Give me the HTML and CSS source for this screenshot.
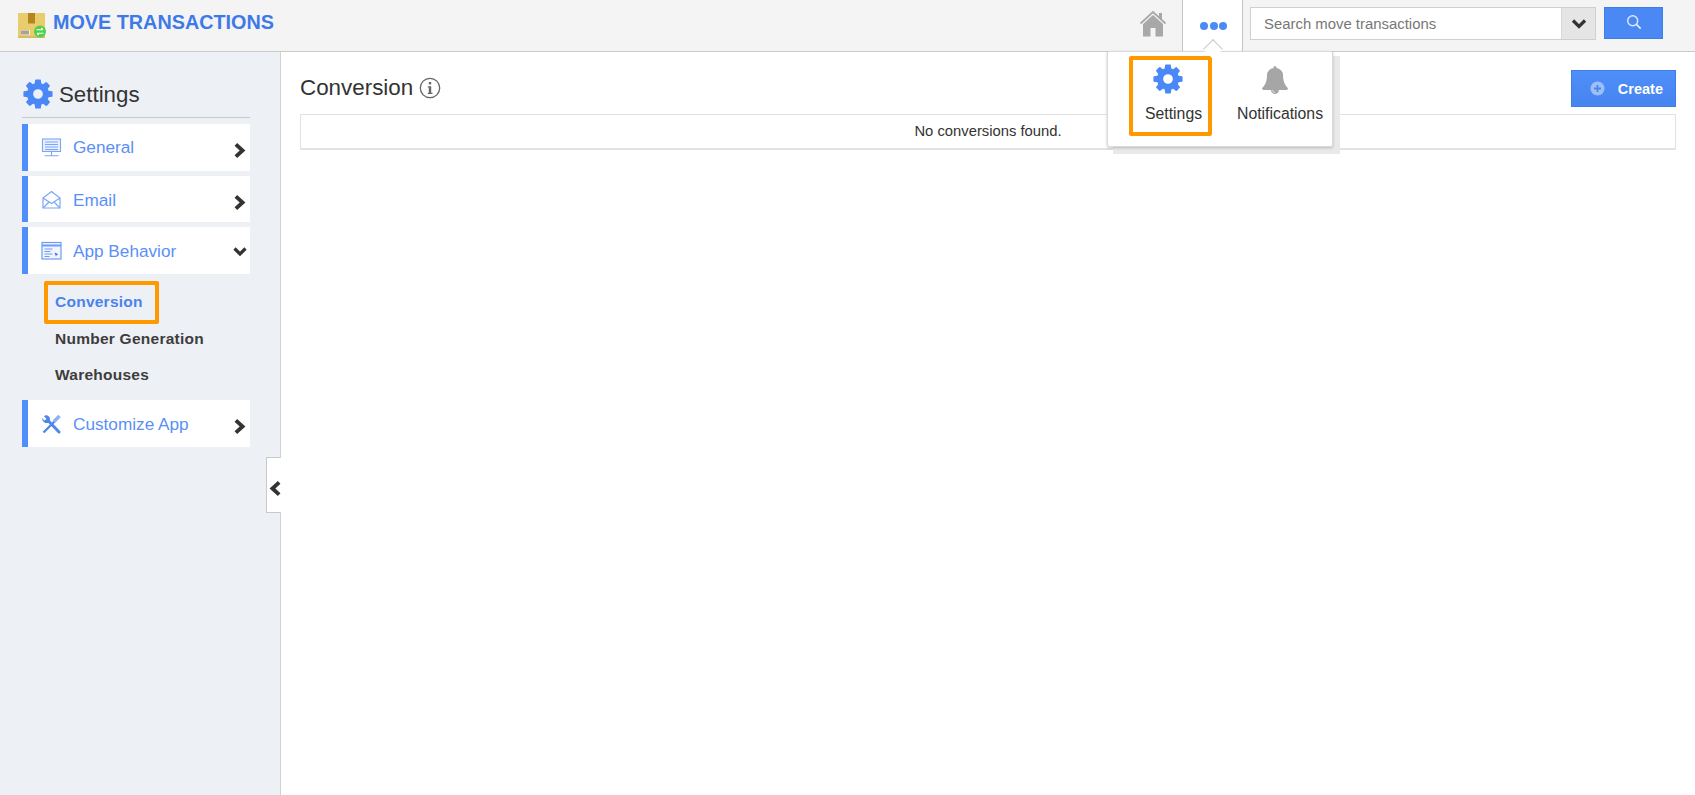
FILE: index.html
```html
<!DOCTYPE html>
<html lang="en">
<head>
<meta charset="utf-8">
<title>Move Transactions</title>
<link rel="stylesheet" href="styles.css">
</head>
<body>
<svg class="defs" aria-hidden="true">
  <symbol id="cog" viewBox="0 0 1792 1792"><path fill-rule="evenodd" d="M1152 896q0-106-75-181t-181-75-181 75-75 181 75 181 181 75 181-75 75-181zm512-109v222q0 12-8 23t-20 13l-185 28q-19 54-39 91 35 50 107 138 10 12 10 25t-9 23q-27 37-99 108t-94 71q-12 0-26-9l-138-108q-44 23-91 38-16 136-29 186-7 28-36 28h-222q-14 0-24.500-8.500t-11.500-21.500l-28-184q-49-16-90-37l-141 107q-10 9-25 9-14 0-25-11-126-114-165-168-7-10-7-23 0-12 8-23 15-21 51-66.500t54-70.500q-27-50-41-99l-183-27q-13-2-21-12.500t-8-23.500v-222q0-12 8-23t19-13l186-28q14-46 39-92-40-57-107-138-10-12-10-24 0-10 9-23 26-36 98.500-107.500t94.500-71.500q13 0 26 10l138 107q44-23 91-38 16-136 29-186 7-28 36-28h222q14 0 24.500 8.500t11.500 21.500l28 184q49 16 90 37l142-107q9-9 24-9 13 0 25 10 129 119 165 170 7 8 7 22 0 12-8 23-15 21-51 66.500t-54 70.500q26 50 41 98l183 28q13 2 21 12.500t8 23.500z"/></symbol>
  <symbol id="chev-r" viewBox="0 0 12 14"><polyline points="3,2 8.500,7 3,12" fill="none" stroke="currentColor" stroke-width="3.200"/></symbol>
</svg>

<header class="topbar">
  <div class="brand">
    <svg class="logo" width="30" height="27" viewBox="0 0 30 27">
      <rect x="1" y="1" width="27" height="24.500" fill="#e9cc6c"/>
      <rect x="1" y="24.500" width="27" height="1.300" fill="#cfb050"/>
      <rect x="11" y="1" width="7" height="10.500" fill="#b5851f"/>
      <rect x="4" y="18" width="9" height="5" fill="#f4f1e4"/>
      <path d="M5 18.500v4M7 18.500v4M9 18.500v4M11 18.500v4" stroke="#555" stroke-width="1"/>
      <circle cx="23" cy="19.500" r="6" fill="#4fd14a"/>
      <path d="M19.500 17.700h6.500M24.200 16l1.800 1.700M26.500 21.300h-6.500M21.800 23l-1.800-1.700" stroke="#fff" stroke-width="1.100" fill="none"/>
    </svg>
    <span class="brand-name">MOVE TRANSACTIONS</span>
  </div>
  <div class="top-actions">
    <a class="home-btn" aria-label="Home">
      <svg width="28" height="27" viewBox="0 0 28 27">
        <path d="M1.500 13.500 14 2l12.500 11.500" fill="none" stroke="#a8a8a8" stroke-width="1.700"/>
        <rect x="20" y="3" width="3" height="6" fill="#a8a8a8"/>
        <path d="M14 5 24 14v12.500h-7.500V18h-5v8.500H4V14z" fill="#a8a8a8"/>
      </svg>
    </a>
    <div class="more-tab">
      <span class="dots"><i></i><i></i><i></i></span>
      <span class="caret"></span>
    </div>
    <form class="search">
      <div class="search-box">
        <span class="search-input">Search move transactions</span>
        <span class="search-drop">
          <svg width="16" height="10" viewBox="0 0 16 10"><polyline points="2,1.500 8,7.500 14,1.500" fill="none" stroke="#333" stroke-width="3.200"/></svg>
        </span>
      </div>
      <button class="search-btn" type="button" aria-label="Search">
        <svg width="16" height="16" viewBox="0 0 16 16"><circle cx="6.700" cy="6.700" r="5" fill="none" stroke="#dfe9fb" stroke-width="1.400"/><path d="m10.400 10.400 4.300 4.300" stroke="#dfe9fb" stroke-width="1.800"/></svg>
      </button>
    </form>
  </div>
  <div class="popup-shadow"></div>
  <nav class="popup">
    <a class="popup-item popup-settings">
      <svg class="popup-ico blue" width="34" height="34"><use href="#cog"/></svg>
      <span>Settings</span>
    </a>
    <a class="popup-item popup-notif">
      <svg class="popup-ico grey" width="28" height="28" viewBox="0 0 1792 1792"><path d="M912 1696q0-16-16-16-59 0-101.500-42.500t-42.500-101.500q0-16-16-16t-16 16q0 73 51.500 124.500t124.500 51.500q16 0 16-16zm816-288q0 52-38 90t-90 38h-448q0 106-75 181t-181 75-181-75-75-181h-448q-52 0-90-38t-38-90q50-42 91-88t85-119.500 74.500-158.500 50-206 19.500-260q0-152 117-282.500t307-158.500q-8-19-8-39 0-40 28-68t68-28 68 28 28 68q0 20-8 39 190 28 307 158.500t117 282.500q0 139 19.500 260t50 206 74.500 158.500 85 119.500 91 88z"/></svg>
      <span>Notifications</span>
    </a>
  </nav>
</header>

<div class="layout">
  <aside class="sidebar">
    <div class="side-title">
      <svg class="side-cog" width="34" height="34"><use href="#cog"/></svg>
      <span>Settings</span>
    </div>
    <ul class="menu">
      <li class="menu-item menu-item-general">
        <svg class="menu-ico" width="22" height="20" viewBox="0 0 22 20" fill="none" stroke="#7ba6f5" stroke-width="1.100">
          <rect x="1.500" y="1" width="18" height="12.500" fill="#e8f0fe"/>
          <path d="M4 4h13M4 6.500h13M4 9h13M4 11.500h13M10.500 14v3.500M3.500 17.800h14"/>
        </svg>
        <span class="menu-label">General</span>
        <svg class="chev" width="15" height="17"><use href="#chev-r"/></svg>
      </li>
      <li class="menu-item menu-item-short">
        <svg class="menu-ico" width="22" height="20" viewBox="0 0 22 20" fill="none" stroke="#7ba6f5" stroke-width="1.200">
          <path d="M2 8 10.500 1.500 19 8v10H2z"/>
          <path d="M2 8l8.500 5.500L19 8M2 18l6.500-6.500M19 18l-6.500-6.500"/>
        </svg>
        <span class="menu-label">Email</span>
        <svg class="chev" width="15" height="17"><use href="#chev-r"/></svg>
      </li>
      <li class="menu-item">
        <svg class="menu-ico" width="22" height="20" viewBox="0 0 22 20" fill="none" stroke="#6f9cf3" stroke-width="1.200">
          <rect x="1" y="1.500" width="19" height="16.500" fill="#f1f5fe"/>
          <path d="M1 4.500h19" stroke-width="2"/>
          <path d="M3.500 8h8M3.500 10.500h6M3.500 13h8M3.500 15.500h5" stroke-width="1"/>
          <path d="M13.500 11.500l3.800 1.700-1.600.7-.7 1.700z" fill="#3a6fd8" stroke="none"/>
        </svg>
        <span class="menu-label">App Behavior</span>
        <svg class="chev-down" width="14" height="10" viewBox="0 0 14 10"><polyline points="1.500,1.500 7,7 12.500,1.500" fill="none" stroke="#333" stroke-width="3.200"/></svg>
      </li>
      <li class="submenu">
        <a class="sub-link sub-active">Conversion</a>
        <a class="sub-link">Number Generation</a>
        <a class="sub-link">Warehouses</a>
      </li>
      <li class="menu-item">
        <svg class="menu-ico" width="22" height="20" viewBox="0 0 22 20" fill="none">
          <path d="M2.500 18.500 13.500 7.500" stroke="#4f86ee" stroke-width="2.300"/>
          <path d="M13 7.500 18.500 2" stroke="#8db1f5" stroke-width="3.600"/>
          <path d="M7 6.500 18 18" stroke="#4f86ee" stroke-width="3" stroke-linecap="round"/>
          <path d="M1 4 3.500 6.500 5.500 5 3 2.200 5 1a5 5 0 0 1 4 5.500L7 9A5 5 0 0 1 1 4z" fill="#4f86ee"/>
        </svg>
        <span class="menu-label">Customize App</span>
        <svg class="chev" width="15" height="17"><use href="#chev-r"/></svg>
      </li>
    </ul>
    <button class="collapse" type="button" aria-label="Collapse sidebar">
      <svg width="15" height="17" viewBox="0 0 12 14"><polyline points="9,2 3.500,7 9,12" fill="none" stroke="#333" stroke-width="3.200"/></svg>
    </button>
  </aside>

  <main class="content">
    <div class="page-head">
      <h1 class="page-title">Conversion</h1>
      <svg class="info" width="22" height="22" viewBox="0 0 22 22"><circle cx="11" cy="11" r="9.700" fill="none" stroke="#666" stroke-width="1.300"/><rect x="9.800" y="5" width="2.400" height="2.400" fill="#666"/><path d="M8.800 9.300h3.400v6.500h1.300v1.200H8.800v-1.200h1v-5.300h-1z" fill="#666"/></svg>
      <button class="create" type="button">
        <svg width="15" height="15" viewBox="0 0 15 15"><circle cx="7.500" cy="7.500" r="7" fill="#9dbff8"/><path d="M7.500 4v7M4 7.500h7" stroke="#4a85f0" stroke-width="1.800"/></svg>
        <span>Create</span>
      </button>
    </div>
    <div class="empty">No conversions found.</div>
  </main>
</div>
</body>
</html>
```
FILE: styles.css
```css
* { box-sizing: border-box; }
html, body { height: 100%; }
body {
  margin: 0;
  overflow: hidden;
  background: #fff;
  color: #333;
  font-family: "Liberation Sans", Arial, sans-serif;
  display: flex;
  flex-direction: column;
}
.defs { position: absolute; width: 0; height: 0; }
ul { list-style: none; margin: 0; padding: 0; }

.topbar {
  position: relative;
  flex: none;
  height: 52px;
  background: #f4f4f4;
  border-bottom: 1px solid #c9c9c9;
  display: flex;
  justify-content: space-between;
}
.brand { display: flex; align-items: flex-start; padding-left: 17px; }
.logo { margin-top: 12px; }
.brand-name {
  margin: 11px 0 0 6px;
  font-size: 19.800px;
  line-height: 22px;
  font-weight: 700;
  color: #3d7ae8;
}
.top-actions { display: flex; }
.home-btn { margin: 10px 15px 0 0; height: 28px; }
.more-tab {
  position: relative;
  width: 61px;
  height: 52px;
  background: #fff;
  border-left: 1px solid #c4c4c4;
  border-right: 1px solid #c4c4c4;
  display: flex;
  justify-content: center;
  padding: 22px 0 0 2px;
}
.dots { display: flex; gap: 1.500px; }
.dots i { width: 8px; height: 8px; border-radius: 50%; background: #4b8bf5; }
.caret {
  position: absolute;
  z-index: 3;
  left: 23px;
  top: 42px;
  width: 14px;
  height: 14px;
  background: #fff;
  border-top: 1px solid #c9c9c9;
  border-left: 1px solid #c9c9c9;
  transform: rotate(45deg);
}
.search { display: flex; align-items: flex-start; padding: 7px 32px 0 7px; }
.search-box {
  display: flex;
  width: 346px;
  height: 33px;
  background: #fff;
  border: 1px solid #cfcfcf;
}
.search-input { flex: 1; padding-left: 13px; font-size: 14.900px; line-height: 32px; color: #777; }
.search-drop {
  width: 34px;
  background: #e5e5e5;
  border-left: 1px solid #d8d8d8;
  display: flex;
  align-items: center;
  justify-content: center;
}
.search-btn {
  width: 59px;
  height: 32px;
  margin-left: 8px;
  padding: 0 0 3px;
  background: #4a88f3;
  border: 1px solid #3f7de8;
  display: flex;
  align-items: center;
  justify-content: center;
}
.popup, .popup-shadow { position: absolute; left: 1107px; top: 51px; width: 226px; height: 96px; }
.popup-shadow { left: 1113px; top: 56px; width: 227px; height: 98px; background: #e9e9e9; z-index: 1; }
.popup {
  z-index: 2;
  background: #fff;
  border: 1px solid #dadada;
  border-radius: 2px;
  box-shadow: 0 1px 3px rgba(0,0,0,.2);
  display: flex;
  font-size: 15.800px;
  color: #333;
}
.popup-item { display: flex; flex-direction: column; align-items: flex-start; }
.popup-settings {
  width: 83px;
  height: 80px;
  margin: 4px 0 0 21px;
  padding: 2px 0 0 12px;
  border: 4px solid #ff9900;
  border-radius: 2px;
}
.popup-settings span { margin-top: 9px; }
.popup-settings .popup-ico { margin-left: 6px; }
.popup-notif { width: 120px; padding: 14px 0 0 25px; }
.popup-notif span { margin-top: 11px; }
.popup-notif .popup-ico { margin-left: 24px; }
.blue { fill: #4a88f8; }
.grey { fill: #a6a6a6; }

.layout { flex: 1; display: flex; min-height: 0; }
.sidebar {
  position: relative;
  flex: none;
  width: 281px;
  background: #edf0f5;
  border-right: 1px solid #cfd2d6;
  padding: 0 30px 0 22px;
}
.side-title {
  display: flex;
  align-items: center;
  height: 66px;
  padding-top: 19px;
  border-bottom: 1px solid #c8c8c8;
  font-size: 22.300px;
  color: #333;
  gap: 4px;
}
.side-title span { margin-top: 1px; }
.side-cog { fill: #4a88f8; flex: none; margin-left: -1px; }
.menu { margin-top: 6px; }
.menu-item {
  position: relative;
  display: flex;
  align-items: center;
  height: 47px;
  margin-bottom: 5px;
  background: #fff;
  border-left: 6px solid #4f8ffb;
  padding-left: 13px;
}
.menu-item-short { height: 46px; }
.menu-ico { flex: none; margin-top: 1px; }
.menu-label { margin: 1px 0 0 10px; font-size: 17.200px; color: #5a8ff7; }
.menu-item-general .menu-label { margin-top: 0; }
.menu-item-short .menu-label { margin-top: 3px; }
.chev, .chev-down { position: absolute; color: #333; }
.chev { right: 3px; top: 18px; }
.chev-down { right: 3px; top: 20px; }
.submenu {
  display: flex;
  flex-direction: column;
  margin: 7px 0 5px 22px;
  height: 114px;
}
.sub-link {
  height: 35.500px;
  padding-left: 11px;
  font-size: 15.500px;
  font-weight: 700;
  line-height: 29px;
  color: #3d3d3d;
  letter-spacing: .25px;
}
.sub-active {
  width: 115px;
  height: 43px;
  padding-left: 7px;
  line-height: 34px;
  color: #4a82ee;
  border: 4px solid #ff9900;
  border-radius: 2px;
}
.collapse {
  position: absolute;
  right: -1px;
  top: 405px;
  width: 15px;
  height: 56px;
  padding: 0;
  overflow: hidden;
  background: #fff;
  border: 1px solid #c9c9c9;
  border-right: 0;
  display: flex;
  align-items: center;
  justify-content: flex-start;
}
.collapse svg { flex: none; margin: 6px 0 0 1px; }

.content { flex: 1; min-width: 0; padding: 18px 19px 0 19px; }
.page-head { display: flex; align-items: flex-start; height: 44px; }
.page-title { margin: 5px 0 0; font-size: 22.400px; line-height: 26px; font-weight: 400; color: #333; }
.info { margin: 7px 0 0 6px; }
.create {
  margin-left: auto;
  width: 105px;
  height: 37px;
  padding: 0 12px 0 18px;
  background: linear-gradient(#4f8ffa, #4684ee);
  border: 1px solid #3f7de8;
  color: #fff;
  font-family: inherit;
  font-size: 14.500px;
  font-weight: 700;
  display: flex;
  align-items: center;
  justify-content: space-between;
}
.empty {
  height: 36px;
  border: 1px solid #e2e2e2;
  border-bottom-width: 2px;
  text-align: center;
  font-size: 14.800px;
  line-height: 33px;
  color: #333;
}
```
